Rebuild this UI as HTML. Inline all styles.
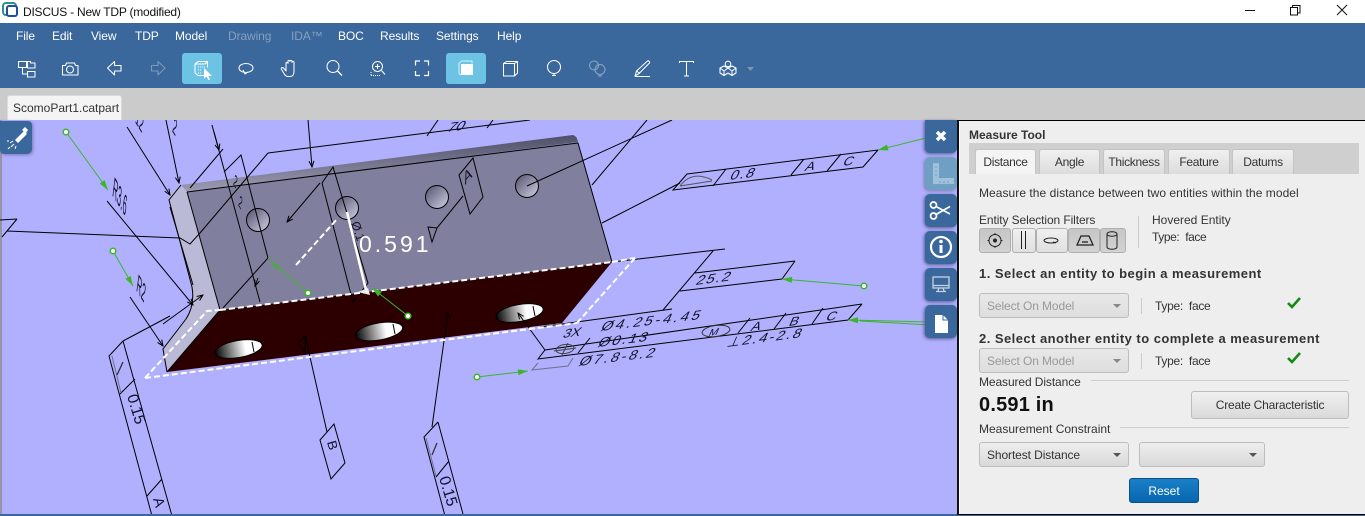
<!DOCTYPE html>
<html><head><meta charset="utf-8"><title>DISCUS</title>
<style>
html,body{margin:0;padding:0;width:1365px;height:516px;overflow:hidden;background:#fff;font-family:"Liberation Sans",sans-serif}
.t{position:absolute;white-space:nowrap;line-height:14px;font-size:12px;color:#333}
.m{color:#fff;top:29px;font-size:12px;letter-spacing:-.1px}
.b{position:absolute;box-sizing:border-box}
.tab{position:absolute;top:149px;height:25px;box-sizing:border-box;border:1px solid #c4c4c4;border-bottom:0;border-radius:3px 3px 0 0;background:linear-gradient(#f0f0f0,#dcdcdc);text-align:center;font-size:12px;line-height:24px;color:#333;letter-spacing:-.3px}
.combo{position:absolute;box-sizing:border-box;height:25px;border:1px solid #bdbdbd;border-radius:3px;background:linear-gradient(#eee,#d9d9d9);font-size:12px;line-height:25px;padding-left:7px;color:#333;letter-spacing:-.1px}
.combo:after{content:"";position:absolute;right:7px;top:10px;border:4px solid transparent;border-top:4px solid #555}
.dis{color:#999;background:linear-gradient(#e8e8e8,#dedede)}
.dis:after{border-top-color:#888}
.fb{position:absolute;top:228px;height:25px;box-sizing:border-box;border:1px solid #b0b0b0;border-radius:3px;background:linear-gradient(#f0f0f0,#e0e0e0)}
.on{background:linear-gradient(#c6c6c6,#d2d2d2)}
svg{position:absolute;left:0;top:0}
</style></head><body>
<div class="b" style="left:0;top:23px;width:1365px;height:65px;background:#3a679c"></div>
<div class="b" style="left:0;top:88px;width:1365px;height:32px;background:#cbcbcb"></div>
<div class="b" style="left:7px;top:95px;width:115px;height:25px;background:#f4f4f4;border:1px solid #dcdcdc;border-bottom:0;border-radius:3px 3px 0 0"></div>
<div class="t" style="left:13px;top:101px">ScomoPart1.catpart</div>
<div class="b" style="left:182px;top:53px;width:40px;height:31px;background:#6dc3e4;border-radius:3px"></div>
<div class="b" style="left:446px;top:53px;width:40px;height:31px;background:#6dc3e4;border-radius:3px"></div>
<div class="t" style="left:23px;top:5px;color:#111;letter-spacing:-.22px">DISCUS - New TDP (modified)</div>
<div class="t m" style="left:16px">File</div>
<div class="t m" style="left:52px">Edit</div>
<div class="t m" style="left:91px">View</div>
<div class="t m" style="left:135px">TDP</div>
<div class="t m" style="left:175px">Model</div>
<div class="t m" style="left:228px;color:#86a0c0">Drawing</div>
<div class="t m" style="left:291px;color:#86a0c0">IDA™</div>
<div class="t m" style="left:338px">BOC</div>
<div class="t m" style="left:380px">Results</div>
<div class="t m" style="left:436px">Settings</div>
<div class="t m" style="left:497px">Help</div>

<!-- viewport -->
<div class="b" style="left:0;top:120px;width:957px;height:394px;background:#b0b0fe"></div>
<div class="b" style="left:0;top:120px;width:2px;height:394px;background:#9494a8"></div>
<div class="b" style="left:0;top:514px;width:1365px;height:2px;background:#3a679c"></div>

<svg width="1365" height="516" viewBox="0 0 1365 516">
<defs>
<linearGradient id="bev" x1="0" y1="0" x2="0" y2="1"><stop offset="0" stop-color="#4f4f68"/><stop offset="1" stop-color="#9c9cb4"/></linearGradient>
<linearGradient id="hg" x1="0" y1="0" x2="1" y2="1"><stop offset="0" stop-color="#50506c"/><stop offset="1" stop-color="#d0d0e6"/></linearGradient>
<linearGradient id="hd" x1="0" y1="0" x2="1" y2="0"><stop offset="0" stop-color="#000"/><stop offset=".65" stop-color="#fff"/><stop offset="1" stop-color="#fff"/></linearGradient>
<marker id="ab" markerUnits="userSpaceOnUse" markerWidth="8" markerHeight="7" refX="7" refY="3.500" orient="auto"><path d="M1 1L7 3.500L1 6" fill="none" stroke="#000" stroke-width="1"/></marker>
<marker id="ag" markerUnits="userSpaceOnUse" markerWidth="12" markerHeight="8" refX="11" refY="4" orient="auto"><path d="M1 1L11 4L1 7z" fill="#3cb52a"/></marker>
<clipPath id="vp"><rect x="0" y="120" width="957" height="394"/></clipPath>
</defs>
<!-- title icon -->
<rect x="3" y="3" width="13" height="12" rx="3" fill="none" stroke="#2f8f8f" stroke-width="2"/>
<rect x="7" y="6" width="10" height="10" rx="2" fill="#fff" stroke="#1f4f9f" stroke-width="2"/>
<!-- window controls -->
<path d="M1245 10.500H1255" stroke="#111" fill="none"/>
<path d="M1290.500 7.500h7v7.500h-7zM1292.500 7.500v-2h7.500v7.500h-2.500" stroke="#111" fill="none"/>
<path d="M1337 5L1347 15M1347 5L1337 15" stroke="#111" fill="none"/>

<!-- toolbar icons -->
<g fill="none" stroke="#fff" stroke-width="1.050" stroke-linejoin="round">
<path d="M18.500 61.500h8v6h-8zM27.500 61.500h3v1.500h4.500v5h-7.500zM27.500 71.500h7.500v5.500h-7.500zM22.500 67.500v6.500h5"/>
<path d="M62.500 65.500h3l1-2.500h8l1 2.500h2.500v9.500h-15.500z"/><circle cx="70" cy="69.500" r="3.500"/>
<path d="M107.500 68l7-6.500v4h6.500v5.500h-6.500v4z"/>
<path d="M165 68l-7-6.500v4h-6.500v5.500h6.500v4z" stroke="#7f9ab9"/>
<path d="M195 64l3-2.500h9.500v6M195 64v9l3 2.500h6M195 64h10M205 64l2.500-2.500"/>
<path d="M198 67h7M198 70h4M198 73h4" stroke-dasharray="1 1"/>
<path d="M204 68l8 8-3.500 0 1.500 3.500-1.500.5-2-3.500-2.500 2z" fill="#fff" stroke="none"/>
<ellipse cx="246" cy="68" rx="7" ry="4.500"/><path d="M243 70l2 4 3-2" />
<path d="M286 71v-7.500c0-1.500 2-1.500 2 0v-2c0-1.500 2-1.500 2 0v0c0-1.500 2-1.500 2 0v1c0-1.500 2-1.500 2 0v9c0 3-1.500 5-4 5h-2c-2 0-3-1-4-3l-2.500-4c-1-1.500 1-2.500 2-1.500z"/>
<circle cx="333" cy="66.500" r="6"/><path d="M337.500 71l4.500 4.500" stroke-width="1.300"/>
<circle cx="377.500" cy="66.500" r="5"/><path d="M381.500 70.500l3.500 4M375 66.500h5M377.500 64v5"/><path d="M371 75.500h9M371 72v3" stroke-dasharray="1 1"/>
<path d="M415.500 65.500v-4.500h4.500M424 61h4.500v4.500M428.500 71v4.500h-4.500M420 75.500h-4.500v-4.500" stroke-width="1.200"/>
<path d="M459 63l3-2h10v2.500M459 63v10.500l2 1.500" stroke-width="1" stroke="#d8f0fa"/><rect x="461" y="64" width="12" height="11" fill="#fff" stroke="none"/>
<path d="M503.500 63.500l3-2h11v11.500l-3 3h-11zM503.500 63.500h11v12.500M514.500 63.500l3-2"/>
<circle cx="554" cy="67" r="6.500"/><path d="M554 73.500v1.500M552 75.500h4"/>
<g stroke="#8ba5c4"><circle cx="594" cy="65.500" r="4.500"/><circle cx="600" cy="69.500" r="5"/><path d="M600 74.500v1.500M598 76h4"/></g>
<path d="M635 76l1.500-5 11-10c1-.7 2.500.7 2 2l-10.500 10.500zM636.500 71l3.500 2.500M635 76.500h15"/>
<path d="M679.500 63v-1.500h14v1.500M686.500 61.500v14M684 76h5"/>
<circle cx="728" cy="64" r="2.800"/><path d="M720 68l4-2 4 2 4-2 4 2v5l-4 2.500-4-2.500-4 2.500-4-2.500zM724 71v4.500M732 71v4.500M720 68l4 3 4-3 4 3 4-3"/>
</g>
<path d="M747 67h7l-3.500 4z" fill="#8a93a4"/>

<g clip-path="url(#vp)">
<!-- solid faces -->
<path d="M181 185L573 135Q577 136 578 142L187 192z" fill="url(#bev)"/>
<path d="M187 192L578 142L612 262L220 310z" fill="#80809e"/>
<path d="M181 185L187 192L220 310L167 372L163 349L186 319Q195 305 192 287L169 200Q171 192 181 185z" fill="#babad6"/>
<path d="M220 310L612 262L562 323L167 372z" fill="#2c0000"/>
<path d="M181 185L169 200L192 287Q195 305 186 319L163 349L167 372" fill="none" stroke="#000" stroke-width="1"/>
<path d="M170 207L193 285" fill="none" stroke="#000" stroke-width="1"/>
<path d="M187 192L220 310L167 372M187 192L578 143L612 262" fill="none" stroke="#000" stroke-width="1"/>
<!-- holes -->
<g stroke="#000" stroke-width="1" fill="url(#hg)">
<circle cx="258" cy="220" r="11.500"/><circle cx="347" cy="208" r="11.500"/><circle cx="437" cy="197" r="11.500"/><circle cx="527" cy="186" r="11.500"/>
</g>
<g stroke="#000" fill="url(#hd)">
<ellipse cx="238.500" cy="349" rx="24" ry="8.500" transform="rotate(-10 238.500 349)"/>
<ellipse cx="379" cy="331.500" rx="24" ry="8.500" transform="rotate(-10 379 331.500)"/>
<ellipse cx="519.500" cy="313" rx="24" ry="8.500" transform="rotate(-10 519.500 313)"/>
</g>
<path d="M252 342l2 10M393 324l2 10M533 306l2 10" stroke="#000" fill="none"/>
<!-- black annotation lines -->
<g fill="none" stroke="#000" stroke-width="1">
<path d="M127 127L170 195" marker-end="url(#ab)"/>
<path d="M166 120L179 183" marker-end="url(#ab)"/>
<path d="M212 125L260 302"/><path d="M214 132L219 150" marker-end="url(#ab)"/>
<path d="M308 120L312 167" marker-end="url(#ab)"/>
<path d="M190 188L223 149"/>
<path d="M224 172L241 155L268 258L223 308"/><path d="M258 278L255 286" marker-end="url(#ab)"/>
<path d="M268 153L530 120M268 153L200 233L190 244L180 238L7 231M17 219L2 237M0 220L17 219"/>
<path d="M438 120L427 136M493 120L487 128"/>
<path d="M107 201L193 305" marker-end="url(#ab)"/>
<path d="M130 297L163 346" marker-end="url(#ab)"/>
<path d="M163 324L203 295" marker-end="url(#ab)"/>
<path d="M123 341L170 316"/>
<path d="M320 183L287 222" marker-end="url(#ab)"/>
<path d="M333 167L368 283L353 302L322 183z"/>
<path d="M473 158L483 197L470 214L459 175z"/>
<path d="M463 196L437 228L428 227L432 242L437 228"/>
<path d="M527 186L672 120M592 185L647 120"/>
<path d="M687 174L878 150L863 167L673 190zM726 169L713 186M804 159L791 175M841 154L827 171"/>
<path d="M680 183L602 223"/>
<path d="M795 261L695 273M795 261L782 279L680 291M713 251L663 310M725 249L612 262M672 309L540 327"/>
<path d="M862 304L545 350L538 359L848 320L862 304M750 318L738 333M786 313L774 329M823 308L812 324M590 338L578 353"/>
<path d="M545 350L518 313" marker-end="url(#ab)"/>
<path d="M432 427L448 312" marker-end="url(#ab)"/>
<path d="M438 422L424 437L445 516M438 422L463 514M449 461L436 477"/>
<path d="M334 424L345 463L331 479L320 440z"/>
<path d="M305 335L327 432M305 336L298 343L305 353z"/>
<path d="M123 341L109 356L152 516M123 341L172 516M135 379L120 394M162 479L147 496"/>
</g>
<path d="M573 358L568 366L532 370L538 363" fill="none" stroke="#6f6f8f"/>
<path d="M112 356L121 393" stroke="#6f6f8f" fill="none"/>
<path d="M123 362L117 375" stroke="#333" stroke-width="1.300" fill="none"/>
<path d="M426 438L436 476" stroke="#6f6f8f" fill="none"/>
<path d="M437 443L432 455" stroke="#333" stroke-width="1.300" fill="none"/>
<!-- dashes -->
<g fill="none" stroke="#fff" stroke-width="2" stroke-dasharray="6 3">
<path d="M220 310L612 262"/>
<path d="M145 378L577 323"/>
<path d="M145 378L207 311L220 310"/>
<path d="M577 323L635 258"/>
<path d="M612 262L635 258"/>
<path d="M296 265L338 218"/>
</g>
<path d="M347 212L366 290" stroke="#fff" stroke-width="2.500"/>
<path d="M358 292l10-4 2 7z" fill="#eee"/>
<!-- green leaders -->
<g fill="none" stroke="#3cb52a" stroke-width="1">
<path d="M66 132L108 190" marker-end="url(#ag)"/>
<path d="M113 251L133 286" marker-end="url(#ag)"/>
<path d="M308 293L268 258"/>
<path d="M273 262L280 268L276 269z" />
<path d="M408 316L372 288" marker-end="url(#ag)"/>
<path d="M477 377L528 371" marker-end="url(#ag)"/>
<path d="M864 286L782 279" marker-end="url(#ag)"/>
<path d="M930 137L878 150" marker-end="url(#ag)"/>
<path d="M930 322L848 320" marker-end="url(#ag)"/>
<path d="M930 325L860 321"/>
</g>
<g fill="#fff" stroke="#3cb52a" stroke-width="1.500">
<circle cx="66" cy="132" r="2.800"/><circle cx="113" cy="251" r="2.800"/><circle cx="308" cy="293" r="2.800"/><circle cx="408" cy="316" r="2.800"/><circle cx="477" cy="377" r="2.800"/><circle cx="864" cy="286" r="2.800"/>
</g>
<!-- annotation text -->
<g font-family="Liberation Sans, sans-serif" fill="#12122a" stroke="none">
<text font-size="15" transform="matrix(1 -.13 -.5 .9 446 132)">70</text>
<text font-size="16" transform="matrix(.4 .65 -.2 1.700 112 195)">R3.6</text>
<text font-size="16" transform="matrix(.4 .65 -.2 1.500 136 290)">R2</text>
<text font-size="16" transform="matrix(.4 .65 -.2 1.300 135 122)">12</text>
<text font-size="16" transform="matrix(.4 .65 -.2 1.300 172 131)">2</text>
<text font-size="14" transform="matrix(.4 .65 -.2 1.100 233 184)">2</text>
<text font-size="14" transform="matrix(.4 .65 -.2 1.100 238 205)">2</text>
<text font-size="13" transform="matrix(.3 .9 -.9 .3 351 223)">Ø.1</text>
<text font-size="15" transform="matrix(.75 -.85 .25 1 465 185)">A</text>
<text font-size="15" letter-spacing="1.500" transform="matrix(1 -.13 -.4 .9 729 180)">0.8</text>
<text font-size="14" transform="matrix(1 -.13 -.4 .9 804 171)">A</text>
<text font-size="14" transform="matrix(1 -.13 -.4 .9 842 166)">C</text>
<text font-size="15" letter-spacing="1.500" transform="matrix(1 -.13 -.4 .9 695 285)">25.2</text>
<text font-size="14" transform="matrix(1 -.13 -.4 .9 562 338)">3X</text>
<text font-size="15" letter-spacing="2.600" transform="matrix(1 -.12 -.4 .9 600 331)">Ø4.25-4.45</text>
<text font-size="15" letter-spacing="2" transform="matrix(1 -.12 -.4 .9 597 347)">Ø0.13</text>
<text font-size="15" letter-spacing="2.400" transform="matrix(1 -.12 -.4 .9 578 366)">Ø7.8-8.2</text>
<text font-size="14" transform="matrix(1 -.13 -.4 .9 750 331)">A</text>
<text font-size="14" transform="matrix(1 -.13 -.4 .9 788 326)">B</text>
<text font-size="14" transform="matrix(1 -.13 -.4 .9 825 321)">C</text>
<text font-size="15" letter-spacing="2" transform="matrix(1 -.13 -.4 .9 726 347)">⊥2.4-2.8</text>
<text font-size="11" transform="matrix(1 -.13 -.4 .9 708 336)">M</text>
<text font-size="15" transform="matrix(.3 1 -1 .3 127 396)">0.15</text>
<text font-size="15" transform="matrix(.3 1 -1 .3 439 478)">0.15</text>
<text font-size="14" transform="matrix(.3 1 -1 .3 153 499)">A</text>
<text font-size="14" transform="matrix(.25 .95 -.9 .25 327 442)">B</text>
</g>
<ellipse cx="716" cy="331" rx="14" ry="5.500" fill="none" stroke="#333" transform="rotate(-8 716 331)"/>
<ellipse cx="565" cy="349" rx="9" ry="4.500" fill="none" stroke="#444" transform="rotate(-8 565 349)"/>
<path d="M554 351L576 348M568 343L562 355" stroke="#444" fill="none"/>
<path d="M680 186Q692 170 712 180M680 186L712 181" fill="none" stroke="#555"/>
<text x="359" y="252" font-family="Liberation Sans, sans-serif" font-size="23" letter-spacing="3" fill="#fff">0.591</text>
</g>
</svg>

<!-- side buttons -->
<div class="b" style="left:925px;top:120px;width:32px;height:33px;background:#3a679c;border-radius:0 0 5px 5px;box-shadow:-1px 1px 3px #5a5a90"></div>
<div class="b" style="left:925px;top:157px;width:32px;height:33px;background:#6fa0c4;border-radius:5px;box-shadow:-1px 1px 3px #7a7ab0"></div>
<div class="b" style="left:925px;top:194px;width:32px;height:33px;background:#3a679c;border-radius:5px;box-shadow:-1px 1px 3px #5a5a90"></div>
<div class="b" style="left:925px;top:231px;width:32px;height:33px;background:#3a679c;border-radius:5px;box-shadow:-1px 1px 3px #5a5a90"></div>
<div class="b" style="left:925px;top:268px;width:32px;height:33px;background:#3a679c;border-radius:5px;box-shadow:-1px 1px 3px #5a5a90"></div>
<div class="b" style="left:925px;top:305px;width:32px;height:33px;background:#3a679c;border-radius:5px;box-shadow:-1px 1px 3px #5a5a90"></div>
<div class="b" style="left:0;top:121px;width:32px;height:33px;background:#3a679c;border-radius:0 4px 5px 4px;box-shadow:1px 1px 3px #7a7ab0"></div>

<!-- panel -->
<div class="b" style="left:957px;top:120px;width:408px;height:395px;background:#eee;border:1px solid #000;border-left:2px solid #111;border-right:0;box-shadow:inset 1px 0 0 #fff"></div>
<div class="t" style="left:969px;top:128px;font-weight:bold;color:#333;font-size:12px">Measure Tool</div>
<div class="b" style="left:969px;top:143px;width:390px;height:31px;background:#cfcfcf"></div>
<div class="tab" style="left:975px;width:61px;background:#f4f4f4">Distance</div>
<div class="tab" style="left:1039px;width:61px">Angle</div>
<div class="tab" style="left:1103px;width:62px">Thickness</div>
<div class="tab" style="left:1168px;width:62px">Feature</div>
<div class="tab" style="left:1232px;width:62px">Datums</div>
<div class="t" style="left:979px;top:186px;letter-spacing:.05px">Measure the distance between two entities within the model</div>
<div class="t" style="left:979px;top:213px;letter-spacing:-.1px">Entity Selection Filters</div>
<div class="b" style="left:1138px;top:216px;width:1px;height:32px;background:#ccc"></div>
<div class="t" style="left:1152px;top:213px">Hovered Entity</div>
<div class="t" style="left:1152px;top:230px;letter-spacing:-.4px">Type:&nbsp; face</div>
<div class="fb on" style="left:979px;width:32px"></div>
<div class="fb" style="left:1012px;width:24px"></div>
<div class="fb" style="left:1036px;width:32px"></div>
<div class="fb on" style="left:1068px;width:32px"></div>
<div class="fb on" style="left:1100px;width:26px"></div>
<div class="t" style="left:979px;top:267px;font-weight:bold;font-size:13px;letter-spacing:.47px">1. Select an entity to begin a measurement</div>
<div class="combo dis" style="left:979px;top:293px;width:150px">Select On Model</div>
<div class="b" style="left:1141px;top:298px;width:1px;height:16px;background:#ccc"></div>
<div class="t" style="left:1155px;top:299px;letter-spacing:-.3px">Type:&nbsp; face</div>
<div class="t" style="left:979px;top:332px;font-weight:bold;font-size:13px;letter-spacing:.46px">2. Select another entity to complete a measurement</div>
<div class="combo dis" style="left:979px;top:348px;width:150px">Select On Model</div>
<div class="b" style="left:1141px;top:353px;width:1px;height:16px;background:#ccc"></div>
<div class="t" style="left:1155px;top:354px;letter-spacing:-.3px">Type:&nbsp; face</div>
<div class="t" style="left:979px;top:375px;letter-spacing:-.1px">Measured Distance</div>
<div class="b" style="left:1091px;top:380px;width:258px;height:1px;background:#ccc"></div>
<div class="t" style="left:979px;top:395px;font-weight:bold;font-size:20px;line-height:20px;letter-spacing:.2px;color:#111">0.591 in</div>
<div class="b" style="left:1191px;top:391px;width:158px;height:28px;border:1px solid #bdbdbd;border-radius:3px;background:linear-gradient(#f0f0f0,#dadada);text-align:center;font-size:12px;line-height:27px;color:#333;letter-spacing:-.2px">Create Characteristic</div>
<div class="t" style="left:979px;top:422px">Measurement Constraint</div>
<div class="b" style="left:1120px;top:427px;width:229px;height:1px;background:#ccc"></div>
<div class="combo" style="left:979px;top:442px;width:150px">Shortest Distance</div>
<div class="combo" style="left:1139px;top:442px;width:126px"></div>
<div class="b" style="left:1129px;top:478px;width:70px;height:25px;border:1px solid #07508c;border-radius:3px;background:linear-gradient(#1a80c8,#0766ae);text-align:center;font-size:12px;line-height:24px;color:#fff">Reset</div>

<svg width="1365" height="516" viewBox="0 0 1365 516" style="pointer-events:none">
<!-- flashlight -->
<g fill="#fff"><path d="M15 140l9-9 3 3-9 9z"/><path d="M22 130l3-3 3 3-2 3z"/></g>
<path d="M13 141l-3 2M14 144l-3 3M7 141h2M10 147l-2 2M16 146l-1 3" stroke="#fff" fill="none"/>
<!-- close -->
<path d="M937 132l8 8M945 132l-8 8" stroke="#fff" stroke-width="3.400" fill="none"/>
<!-- ruler -->
<path d="M933 163v21h21v-6h-15v-15z" fill="#9fc2da"/>
<path d="M936 166v2M936 170v2M936 174v2M940 181v2M944 181v2M948 181v2" stroke="#6fa0c4" fill="none"/>
<!-- scissors -->
<g fill="none" stroke="#fff" stroke-width="1.700"><circle cx="933.500" cy="205" r="3"/><circle cx="933.500" cy="216" r="3"/><path d="M936 206.500L950 214M936 214.500L950 206.500"/></g>
<!-- info -->
<circle cx="941" cy="247" r="10" fill="none" stroke="#fff" stroke-width="2.200"/>
<rect x="939.500" y="245" width="3" height="8" fill="#fff"/><circle cx="941" cy="241.500" r="1.800" fill="#fff"/>
<!-- monitor -->
<g fill="none" stroke="#c6d3e2" stroke-width="1.300"><rect x="933" y="277" width="16" height="11"/><path d="M933 285.500h16M939 288l-1 3M943 288l1 3M936 291.500h10"/></g>
<!-- doc -->
<path d="M935 315h8l5 5v13h-13z" fill="#fff"/><path d="M943 315v5h5" fill="none" stroke="#3a679c"/>
<!-- filter icons -->
<g fill="none" stroke="#222" stroke-width="1">
<circle cx="995" cy="240.500" r="6"/><circle cx="995" cy="240.500" r="1.500" fill="#222"/><path d="M995 233v2M995 246v2M987.500 240.500h2M1000.500 240.500h2"/>
<path d="M1021.500 231v18M1025.500 231v18"/>
<ellipse cx="1051" cy="240.500" rx="7" ry="2.500"/><path d="M1053 242l3 1" />
<path d="M1077 245l4-9h8l4 9z" stroke-width="1.300"/><path d="M1082 242h6" stroke-width="1.300"/>
<path d="M1107 234c0-3 10-3 10 0v13c0 3-10 3-10 0zM1107 234c0 3 10 3 10 0"/>
</g>
<!-- checks -->
<path d="M1288 303l4 4 8-9" fill="none" stroke="#158a15" stroke-width="2.600"/>
<path d="M1288 358l4 4 8-9" fill="none" stroke="#158a15" stroke-width="2.600"/>
</svg>
</body></html>
